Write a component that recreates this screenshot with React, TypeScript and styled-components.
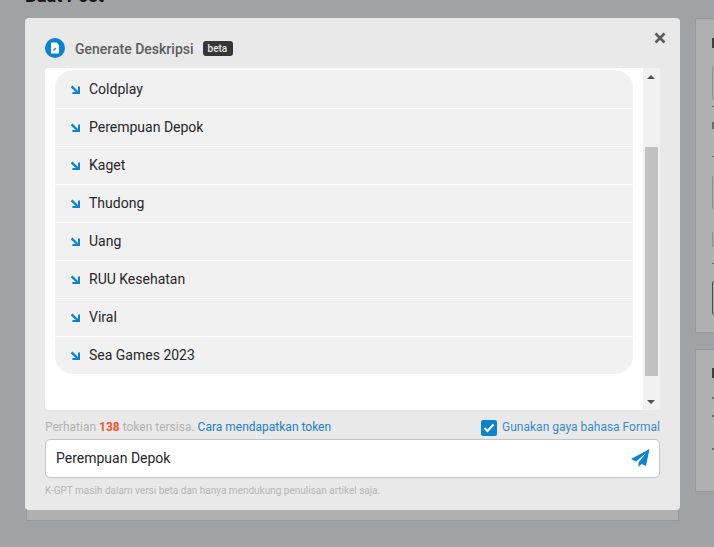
import { createGlobalStyle } from 'styled-components';
import styled from 'styled-components';

const GlobalStyle = createGlobalStyle`
  html, body {
    margin: 0;
    height: 100%;
    overflow: hidden;
    background: #a1a2a4;
    font-family: Roboto, "Liberation Sans", sans-serif;
  }
`;

const Page = styled.div`
  position: relative;
  width: 714px;
  height: 547px;
  overflow: hidden;
  display: grid;
  grid-template-columns: 653px 200px;
  column-gap: 16px;
  padding-left: 26px;
`;

const MainColumn = styled.div`
  display: flex;
  flex-direction: column;
`;

const PageTitle = styled.h1`
  margin: -15px 0 0 -1px;
  height: 33px;
  font-size: 18px;
  line-height: 22px;
  font-weight: 700;
  color: #161616;
`;

const BackCard = styled.div`
  height: 503px;
  box-sizing: border-box;
  background: #b0b0b0;
  border: 1px solid #989899;
  border-top: 0;
`;

const SideColumn = styled.div`
  display: flex;
  flex-direction: column;
  gap: 16px;
  padding-top: 18px;
`;

const SideCard = styled.div<{ $height: number }>`
  height: ${(p) => p.$height}px;
  box-sizing: border-box;
  padding-left: 16px;
  background: #b0b0b0;
  border: 1px solid #989899;
`;

const SideHeading = styled.div<{ $top: number }>`
  margin-top: ${(p) => p.$top}px;
  width: 10px;
  height: 10px;
  background: #3f3f3f;
`;

const SideField = styled.div<{ $top: number; $height: number }>`
  margin-top: ${(p) => p.$top}px;
  height: ${(p) => p.$height}px;
  width: 80px;
  box-sizing: border-box;
  border: 1px solid #8e8e8e;
  border-radius: 2px;
`;

const SideMark = styled.div<{ $top: number; $height?: number }>`
  margin-top: ${(p) => p.$top}px;
  height: ${(p) => p.$height ?? 1}px;
  width: 10px;
  background: #6c6c6c;
`;

const SideButton = styled.div`
  margin-top: 17px;
  height: 34px;
  width: 80px;
  box-sizing: border-box;
  border: 1px solid #4d4d4d;
  border-radius: 2px;
`;

const Modal = styled.div`
  position: absolute;
  left: 25px;
  top: 18px;
  width: 655px;
  height: 492px;
  box-sizing: border-box;
  padding: 19px 20px 0;
  background: #e9e9e9;
  border-radius: 4px;
  display: flex;
  flex-direction: column;
`;

const Header = styled.div`
  display: flex;
  align-items: center;
  height: 21px;
  margin-bottom: 10px;
`;

const HeaderIcon = styled.span`
  width: 20px;
  height: 20px;
  flex: none;
  margin-right: 10px;
  display: block;
`;

const HeaderTitle = styled.span`
  padding-top: 2px;
  font-size: 14px;
  font-weight: 500;
  color: #5d5d5d;
`;

const BetaBadge = styled.span`
  margin: 2px 0 0 9px;
  padding: 0 6px 0 5px;
  height: 15px;
  line-height: 16px;
  font-size: 10px;
  font-weight: 500;
  color: #e6e6e6;
  background: #363636;
  border-radius: 3px;
`;

const CloseButton = styled.button`
  position: absolute;
  top: 12px;
  right: 14px;
  width: 13px;
  height: 15px;
  padding: 0;
  border: 0;
  background: none;
  display: flex;
  align-items: center;
  justify-content: center;
`;

const ListPanel = styled.div`
  height: 342px;
  background: #fff;
  display: flex;
  border-radius: 4px 0 0 4px;
`;

const ListScroll = styled.div`
  flex: 1;
  padding: 2px 10px 0;
`;

const List = styled.ul`
  margin: 0;
  padding: 1px 0 0;
  list-style: none;
  width: 578px;
  background: #f1f1f1;
  border-radius: 18px;
  overflow: hidden;
`;

const ListItem = styled.li`
  height: 35px;
  display: flex;
  align-items: center;
  padding: 0 0 2px 16px;
  gap: 9px;
  font-size: 14px;
  color: #27272a;
  border-bottom: 1px solid #fff;
  &:last-child {
    border-bottom: 0;
  }
  svg {
    margin-top: 2px;
  }
`;

const Track = styled.div`
  width: 17px;
  flex: none;
  background: #f1f1f1;
  display: flex;
  flex-direction: column;
  align-items: center;
  position: relative;
`;

const Arrow = styled.span<{ $down?: boolean }>`
  position: absolute;
  left: 4px;
  ${(p) => (p.$down ? 'bottom: 6px;' : 'top: 7px;')}
  width: 0;
  height: 0;
  border-left: 4px solid transparent;
  border-right: 4px solid transparent;
  ${(p) => (p.$down ? 'border-top: 4px solid #505050;' : 'border-bottom: 4px solid #505050;')}
`;

const Thumb = styled.div`
  position: absolute;
  left: 2px;
  top: 79px;
  width: 13px;
  height: 229px;
  background: #c1c1c1;
`;

const InfoRow = styled.div`
  display: flex;
  justify-content: space-between;
  align-items: flex-start;
  height: 29px;
  padding-top: 9px;
  box-sizing: border-box;
  font-size: 12px;
  line-height: 16px;
`;

const TokenNote = styled.span`
  color: #b2b2b2;
`;

const TokenCount = styled.b`
  color: #f4532f;
  font-weight: 700;
`;

const HelpLink = styled.a`
  color: #1f7fc6;
`;

const FormalOption = styled.label`
  display: flex;
  gap: 5px;
  color: #3a8bcb;
`;

const Check = styled.span`
  width: 16px;
  height: 16px;
  margin-top: 1px;
  border-radius: 2px;
  background: #0d83cd;
  display: flex;
  align-items: center;
  justify-content: center;
`;

const InputBox = styled.div`
  height: 39px;
  box-sizing: border-box;
  display: flex;
  align-items: center;
  justify-content: space-between;
  padding: 0 9px 1px 10px;
  background: #fff;
  border: 1px solid #c4c4c4;
  border-radius: 5px;
  font-size: 14px;
  color: #27272a;
`;

const Disclaimer = styled.p`
  margin: 6px 0 0;
  font-size: 10px;
  line-height: 14px;
  color: #b5b5b5;
`;

const topics = [
  'Coldplay',
  'Perempuan Depok',
  'Kaget',
  'Thudong',
  'Uang',
  'RUU Kesehatan',
  'Viral',
  'Sea Games 2023',
];

function TrendIcon() {
  return (
    <svg width="9" height="9" viewBox="0 0 9 9" fill="none">
      <path d="M0.6 1.4 L6.4 7" stroke="#0d83cd" strokeWidth="2.4" />
      <path d="M8 1.4 V8 H1.4" stroke="#0d83cd" strokeWidth="2" />
    </svg>
  );
}

export default function App() {
  return (
    <>
      <GlobalStyle />
      <Page>
        <MainColumn>
          <PageTitle>Buat Post</PageTitle>
          <BackCard />
        </MainColumn>
        <SideColumn>
          <SideCard $height={315}>
            <SideHeading $top={19} />
            <SideField $top={18} $height={34} />
            <SideMark $top={6} />
            <SideMark $top={15} $height={7} />
            <SideMark $top={27} />
            <SideField $top={19} $height={33} />
            <SideField $top={23} $height={15} />
            <SideMark $top={16} />
            <SideButton />
          </SideCard>
          <SideCard $height={143}>
            <SideHeading $top={18} />
            <SideMark $top={19} $height={2} />
            <SideMark $top={16} $height={2} />
            <SideMark $top={31} $height={2} />
          </SideCard>
        </SideColumn>
        <Modal>
          <Header>
            <HeaderIcon>
              <svg width="20" height="20" viewBox="0 0 20 20">
                <circle cx="10" cy="10" r="10" fill="#0d83cd" />
                <path d="M6 4.5h5.5L14 7v8.5H6z" fill="#fff" />
                <path d="M8.5 12.5l2.5-2.5" stroke="#0d83cd" strokeWidth="1.2" />
              </svg>
            </HeaderIcon>
            <HeaderTitle>Generate Deskripsi</HeaderTitle>
            <BetaBadge>beta</BetaBadge>
          </Header>
          <CloseButton aria-label="Tutup">
            <svg width="12" height="12" viewBox="0 0 12 12">
              <path d="M1.5 1.5l9 9M10.5 1.5l-9 9" stroke="#5a5a5a" strokeWidth="2.6" />
            </svg>
          </CloseButton>
          <ListPanel>
            <ListScroll>
              <List>
                {topics.map((topic) => (
                  <ListItem key={topic}>
                    <TrendIcon />
                    {topic}
                  </ListItem>
                ))}
              </List>
            </ListScroll>
            <Track>
              <Arrow />
              <Thumb />
              <Arrow $down />
            </Track>
          </ListPanel>
          <InfoRow>
            <TokenNote>
              Perhatian <TokenCount>138</TokenCount> token tersisa.{' '}
              <HelpLink>Cara mendapatkan token</HelpLink>
            </TokenNote>
            <FormalOption>
              <Check>
                <svg width="12" height="10" viewBox="0 0 12 10" fill="none">
                  <path d="M1.5 5l3 3 6-6.5" stroke="#fff" strokeWidth="2.2" />
                </svg>
              </Check>
              Gunakan gaya bahasa Formal
            </FormalOption>
          </InfoRow>
          <InputBox>
            Perempuan Depok
            <svg width="19" height="18" viewBox="0 0 19 18">
              <path d="M18.5 0L0 10l5 2.5L15 4 7.5 13.5V18l3-3 4.5 2z" fill="#0d83cd" />
            </svg>
          </InputBox>
          <Disclaimer>K-GPT masih dalam versi beta dan hanya mendukung penulisan artikel saja.</Disclaimer>
        </Modal>
      </Page>
    </>
  );
}
